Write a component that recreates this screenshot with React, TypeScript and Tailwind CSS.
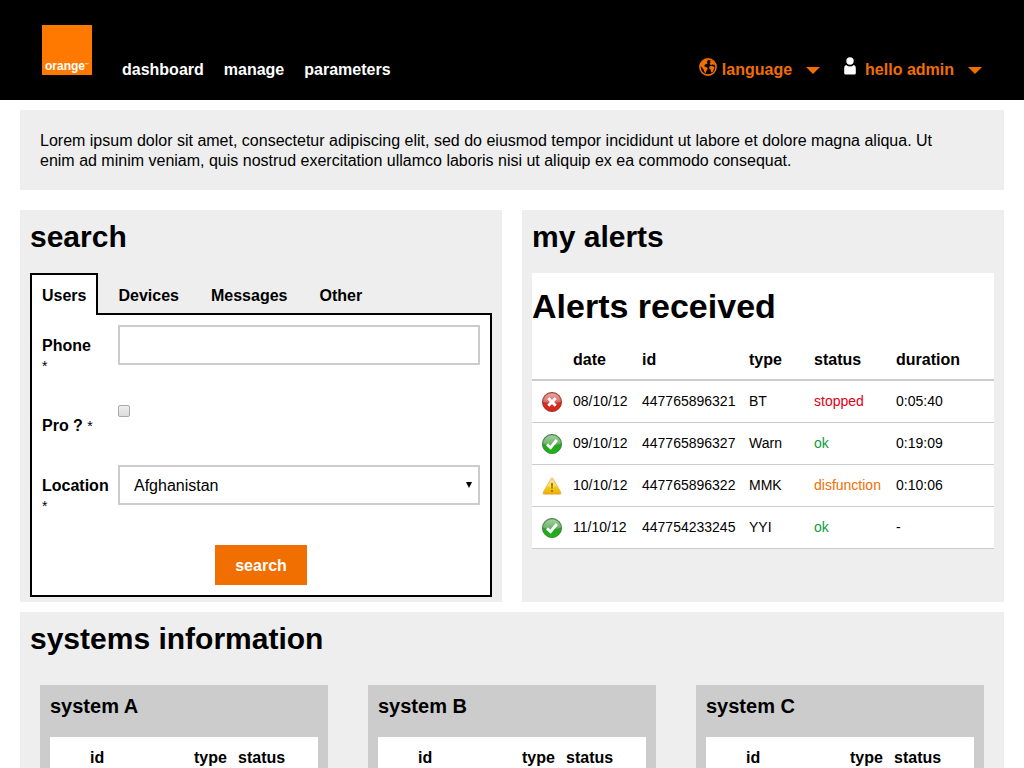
type Status = "error" | "ok" | "warning";

const alerts: { icon: Status; date: string; id: string; type: string; status: string; color: string; duration: string }[] = [
  { icon: "error", date: "08/10/12", id: "447765896321", type: "BT", status: "stopped", color: "text-[#dc0014]", duration: "0:05:40" },
  { icon: "ok", date: "09/10/12", id: "447765896327", type: "Warn", status: "ok", color: "text-[#0d9c3c]", duration: "0:19:09" },
  { icon: "warning", date: "10/10/12", id: "447765896322", type: "MMK", status: "disfunction", color: "text-[#f16e00]", duration: "0:10:06" },
  { icon: "ok", date: "11/10/12", id: "447754233245", type: "YYI", status: "ok", color: "text-[#0d9c3c]", duration: "-" },
];

function IconGradients() {
  return (
    <svg className="absolute h-0 w-0" aria-hidden="true">
      <defs>
        <linearGradient id="red" x2="0" y2="1"><stop stopColor="#c8574b" /><stop offset=".5" stopColor="#cc3328" /><stop offset="1" stopColor="#dc2417" /></linearGradient>
        <linearGradient id="green" x2="0" y2="1"><stop stopColor="#4f9a4b" /><stop offset=".5" stopColor="#2f9a2a" /><stop offset="1" stopColor="#14bd0c" /></linearGradient>
        <linearGradient id="yellow" x2="0" y2="1"><stop stopColor="#f0c95a" /><stop offset=".5" stopColor="#f9d21f" /><stop offset="1" stopColor="#eda900" /></linearGradient>
        <linearGradient id="gloss" x2="0" y2="1"><stop stopColor="#fff" stopOpacity=".5" /><stop offset="1" stopColor="#fff" stopOpacity=".25" /></linearGradient>
      </defs>
    </svg>
  );
}

function StatusIcon({ kind }: { kind: Status }) {
  if (kind === "warning") {
    return (
      <svg className="block h-5 w-5" viewBox="0 0 20 20" role="img" aria-label="warning">
        <path d="M8.8 2.8Q10 .8 11.2 2.8L18.9 16.4Q19.5 18.2 18 18.2H2Q.5 18.2 1.1 16.4Z" fill="url(#yellow)" stroke="#d9a848" strokeWidth=".6" />
        <path d="M9 3.5Q10 2 11 3.5L14.5 10Q10 12 5.3 10Z" fill="url(#gloss)" />
        <path d="M9.1 7H10.9L10.5 12.8H9.5Z" fill="#8a6500" />
        <circle cx="10" cy="15" r=".9" fill="#8a6500" />
      </svg>
    );
  }
  const bad = kind === "error";
  return (
    <svg className="block h-5 w-5" viewBox="0 0 20 20" role="img" aria-label={kind}>
      <circle cx="10" cy="10" r="9.6" fill={bad ? "url(#red)" : "url(#green)"} stroke={bad ? "#8e2920" : "#39743a"} strokeWidth=".8" />
      <path d="M1.2 10A8.8 8.8 0 0 1 18.8 10Q10 12 1.2 10Z" fill="url(#gloss)" />
      {bad ? (
        <path d="M6.3 6.3L13.7 13.7M13.7 6.3L6.3 13.7" stroke="#fff" strokeWidth="3" />
      ) : (
        <path d="M5 10.4L8.6 13.7L14.8 6" fill="none" stroke="#fff" strokeWidth="2.8" />
      )}
    </svg>
  );
}

function Globe() {
  return (
    <svg className="mr-[5px] mb-[6px] h-[18px] w-[18px]" viewBox="0 0 18 18" fill="currentColor" aria-hidden="true">
      <circle cx="9" cy="9" r="8.1" fill="none" stroke="currentColor" strokeWidth="1.6" />
      <path d="M2 5Q4 2 7 1.6L9 2.6L7.8 4L8.6 5L7.4 6.2L6 6.6L5.2 8L6.4 8.8L8 9.6L8.8 11L7.4 12.8L6.8 15L5.6 14.6L4.8 12L3.4 10L2 8.4L1 8Z" />
      <path d="M10.4 2.6L12.6 2.4Q15.2 4 16.4 6.6L15 7.2L13.8 6.2L12.6 7L11 6.6L10.6 5.2L11.8 4.4Z" />
      <path d="M10.4 8.4L12.4 7.8L14.6 8.6L15.6 9.6L14.8 11.4L13.6 14L12.2 14.4L11.8 11.8L10.2 10.6Z" />
    </svg>
  );
}

function Caret() {
  return (
    <svg className="h-[7px] w-[14px]" viewBox="0 0 14 7" aria-hidden="true">
      <path d="M0 0H14L7 7Z" fill="currentColor" />
    </svg>
  );
}

function Header() {
  return (
    <header className="flex h-[100px] items-end bg-black pr-[42px] pb-5 pl-[42px] font-bold text-white">
      <a href="#" className="mb-[5px] flex h-[50px] w-[50px] items-end justify-center bg-[#ff7900] text-[12px] leading-[17px]">
        orange<span className="mb-[8px] text-[4px] leading-[4px]">™</span>
      </a>
      <nav className="ml-[30px] flex gap-5">
        <a href="#">dashboard</a>
        <a href="#">manage</a>
        <a href="#">parameters</a>
      </nav>
      <div className="ml-auto flex h-5 items-center text-[#f16e00]">
        <button type="button" className="flex items-center">
          <Globe />
          language
          <span className="ml-[14px]"><Caret /></span>
        </button>
        <button type="button" className="ml-6 flex items-center">
          <svg className="mr-[9px] mb-[9px] h-[18px] w-[12px]" viewBox="0 0 12 18" fill="#fff" aria-hidden="true">
            <circle cx="6" cy="4" r="3.7" />
            <path d="M2.2 8Q6 11 9.8 8Q11.8 8.4 11.8 11V16.2Q11.8 17.6 10.4 17.6H1.6Q.2 17.6.2 16.2V11Q.2 8.4 2.2 8Z" />
          </svg>
          hello admin
          <span className="ml-[14px]"><Caret /></span>
        </button>
      </div>
    </header>
  );
}

function Required() {
  return <span className="text-[14px] font-normal">*</span>;
}

function SearchPanel() {
  return (
    <section className="flex flex-col bg-[#eee] px-[10px] pb-[5px]">
      <h2 className="pt-[9px] text-[30px] leading-9 font-bold">search</h2>
      <div role="tablist" className="mt-[18px] -mb-[2px] flex font-bold">
        <button type="button" role="tab" aria-selected="true" className="relative h-[42px] border-2 border-b-0 border-black bg-white px-[10px] pt-[2px]">Users</button>
        <button type="button" role="tab" aria-selected="false" className="ml-[10px] h-[42px] px-[10px] pt-1">Devices</button>
        <button type="button" role="tab" aria-selected="false" className="ml-3 h-[42px] px-[10px] pt-1">Messages</button>
        <button type="button" role="tab" aria-selected="false" className="ml-3 h-[42px] px-[10px] pt-1">Other</button>
      </div>
      <form className="grow border-2 border-black bg-white p-[10px]" onSubmit={(e) => e.preventDefault()}>
        <div className="grid grid-cols-[66px_1fr] gap-x-[10px]">
          <label htmlFor="phone" className="h-20 pt-[11px] font-bold">Phone<br /><Required /></label>
          <input id="phone" type="text" className="h-10 w-full border-2 border-[#ccc] bg-white px-[14px]" />
          <label htmlFor="pro" className="h-[60px] pt-[11px] font-bold">Pro ? <Required /></label>
          <div>
            <input id="pro" type="checkbox" className="block h-3 w-3 appearance-none rounded-[2px] border border-[#aaa] bg-linear-to-b from-[#eee] to-[#dcdcdc] checked:bg-[#555]" />
          </div>
          <label htmlFor="location" className="h-20 pt-[11px] font-bold">Location<br /><Required /></label>
          <div className="grid h-10">
            <select id="location" className="col-start-1 row-start-1 h-10 w-full appearance-none border-2 border-[#ccc] bg-white px-[14px] pt-[2px]">
              <option>Afghanistan</option>
            </select>
            <svg className="pointer-events-none col-start-1 row-start-1 mr-[8px] h-[6px] w-[6px] self-center justify-self-end" viewBox="0 0 6 6" aria-hidden="true">
              <path d="M0 0H6L3 6Z" />
            </svg>
          </div>
        </div>
        <button type="submit" className="mx-auto block h-10 bg-[#f16e00] px-5 pt-[2px] font-bold text-white">search</button>
      </form>
    </section>
  );
}

function AlertsPanel() {
  return (
    <section className="bg-[#eee] px-[10px]">
      <h2 className="pt-[9px] text-[30px] leading-9 font-bold">my alerts</h2>
      <div className="mt-[18px] bg-white pt-[15px]">
        <h3 className="text-[34px] leading-9 font-bold">Alerts received</h3>
        <table className="mt-[14px] w-full table-fixed border-collapse text-left">
          <colgroup>
            <col className="w-[41px]" />
            <col className="w-[69px]" />
            <col className="w-[107px]" />
            <col className="w-[65px]" />
            <col className="w-[82px]" />
            <col />
          </colgroup>
          <thead>
            <tr className="h-[42px] border-b-2 border-[#ccc]">
              <th aria-label="state"></th>
              <th className="pt-[2px]">date</th>
              <th className="pt-[2px]">id</th>
              <th className="pt-[2px]">type</th>
              <th className="pt-[2px]">status</th>
              <th className="pt-[2px]">duration</th>
            </tr>
          </thead>
          <tbody className="text-[14px]">
            {alerts.map((a) => (
              <tr key={a.date} className="h-[42px] border-b border-[#ccc]">
                <td className="pt-[2px] pl-[10px]"><StatusIcon kind={a.icon} /></td>
                <td>{a.date}</td>
                <td>{a.id}</td>
                <td>{a.type}</td>
                <td className={a.color}>{a.status}</td>
                <td>{a.duration}</td>
              </tr>
            ))}
          </tbody>
        </table>
      </div>
    </section>
  );
}

function SystemCard({ name }: { name: string }) {
  return (
    <article className="bg-[#ccc] px-[10px] pt-[9px]">
      <h3 className="text-[20px] leading-6 font-bold">{name}</h3>
      <div className="mt-[19px] bg-white">
        <table className="w-full table-fixed border-collapse text-left">
          <colgroup>
            <col className="w-10" />
            <col className="w-[104px]" />
            <col className="w-11" />
            <col />
          </colgroup>
          <thead>
            <tr>
              <th aria-label="state"></th>
              <th className="pt-[11px]">id</th>
              <th className="pt-[11px]">type</th>
              <th className="pt-[11px]">status</th>
            </tr>
          </thead>
        </table>
      </div>
    </article>
  );
}

export default function App() {
  return (
    <div className="min-h-screen bg-white font-['Liberation_Sans',Arial,sans-serif] text-[16px] leading-5 text-black">
      <IconGradients />
      <Header />
      <main className="px-5 pt-[10px]">
        <p className="bg-[#eee] pt-[21px] pr-[50px] pb-[19px] pl-5">
          Lorem ipsum dolor sit amet, consectetur adipiscing elit, sed do eiusmod tempor incididunt ut labore et dolore magna aliqua. Ut enim ad minim veniam, quis nostrud exercitation ullamco laboris nisi ut aliquip ex ea commodo consequat.
        </p>
        <div className="mt-5 grid grid-cols-2 gap-5">
          <SearchPanel />
          <AlertsPanel />
        </div>
        <section className="mt-[10px] bg-[#eee]">
          <h2 className="px-[10px] pt-[9px] text-[30px] leading-9 font-bold">systems information</h2>
          <div className="grid grid-cols-3 gap-10 px-5 pt-7">
            <SystemCard name="system A" />
            <SystemCard name="system B" />
            <SystemCard name="system C" />
          </div>
        </section>
      </main>
    </div>
  );
}
